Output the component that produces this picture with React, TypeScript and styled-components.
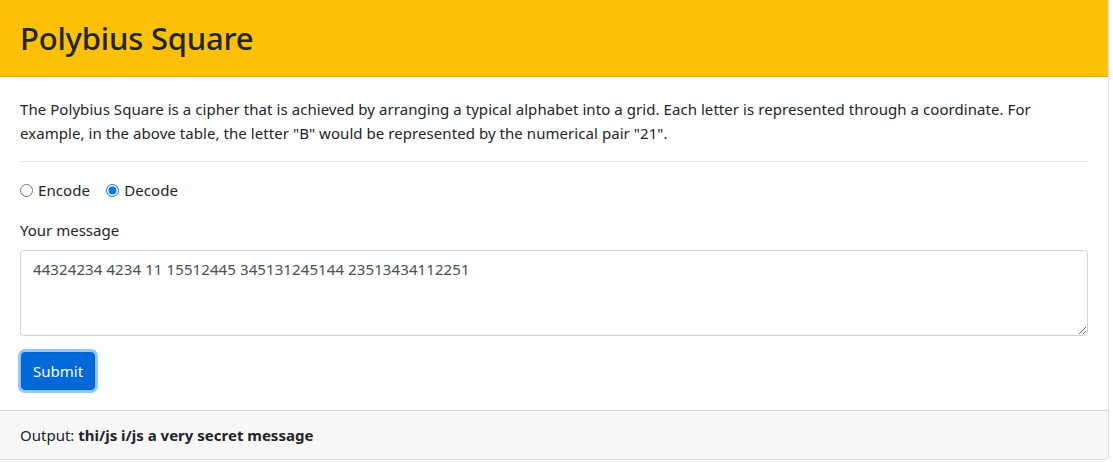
import React from "react";
import styled, { createGlobalStyle } from "styled-components";

const Global = createGlobalStyle`
  html, body { margin: 0; padding: 0; background: #fff; }
  body {
    font-family: "Noto Sans", "Open Sans", sans-serif;
    font-size: 16px;
    line-height: 24px;
    color: #212529;
  }
  * { box-sizing: border-box; }
`;

const Card = styled.div`
  width: 1109px;
  border: 1px solid rgba(0, 0, 0, 0.125);
  border-left: none;
  border-top: none;
  border-radius: 0 0 4px 0;
  display: flex;
  flex-direction: column;
`;

const Header = styled.div`
  height: 77px;
  background: #ffc107;
  border-bottom: 1px solid rgba(0, 0, 0, 0.125);
  padding: 0 20px;
  display: flex;
  align-items: center;
`;

const Title = styled.h2`
  margin: 0;
  font-size: 31px;
  font-weight: 500;
  line-height: 36px;
  color: #212529;
  letter-spacing: -0.2px;
`;

const Body = styled.div`
  padding: 20px;
`;

const Para = styled.p`
  margin: 0 0 16px;
  font-size: 15px;
  letter-spacing: 0.06px;
`;

const Rule = styled.hr`
  margin: 0 0 16px;
  border: 0;
  border-top: 1px solid rgba(0, 0, 0, 0.1);
`;

const RadioRow = styled.div`
  display: flex;
  align-items: center;
  gap: 16px;
  margin-bottom: 16px;
  height: 24px;
  font-size: 15px;
  letter-spacing: 0.1px;
`;

const RadioLabel = styled.label`
  display: inline-flex;
  align-items: center;
  gap: 5px;
`;

const Radio = styled.input`
  margin: 0;
  width: 13px;
  height: 13px;
`;

const FieldLabel = styled.label`
  display: block;
  margin-bottom: 8px;
  font-size: 15px;
`;

const TextArea = styled.textarea`
  display: block;
  width: 1068px;
  height: 86px;
  padding: 6px 12px;
  font-family: inherit;
  font-size: 15px;
  line-height: 24px;
  letter-spacing: 0.1px;
  color: #495057;
  border: 1px solid #ced4da;
  border-radius: 4px;
  margin: 0 0 16px;
  resize: vertical;
  outline: none;
`;

const Button = styled.button`
  height: 38px;
  padding: 0 11px;
  font-family: inherit;
  font-size: 15px;
  color: #fff;
  background: #0069d9;
  border: 1px solid #0062cc;
  border-radius: 4px;
  box-shadow: 0 0 0 3px rgba(38, 143, 255, 0.5);
  margin-left: 1px;
`;

const Footer = styled.div`
  padding: 12px 20px;
  background: #f7f7f7;
  border-top: 1px solid rgba(0, 0, 0, 0.125);
  font-size: 15px;
`;

export default function App() {
  return (
    <>
      <Global />
      <Card>
        <Header>
          <Title>Polybius Square</Title>
        </Header>
        <Body>
          <Para>
            The Polybius Square is a cipher that is achieved by arranging a typical alphabet into a grid. Each letter is
            represented through a coordinate. For example, in the above table, the letter "B" would be represented by the
            numerical pair "21".
          </Para>
          <Rule />
          <RadioRow>
            <RadioLabel>
              <Radio type="radio" name="mode" /> Encode
            </RadioLabel>
            <RadioLabel>
              <Radio type="radio" name="mode" defaultChecked /> Decode
            </RadioLabel>
          </RadioRow>
          <FieldLabel>Your message</FieldLabel>
          <TextArea defaultValue="44324234 4234 11 15512445 345131245144 23513434112251" />
          <Button>Submit</Button>
        </Body>
        <Footer>
          Output: <b>thi/js i/js a very secret message</b>
        </Footer>
      </Card>
    </>
  );
}
